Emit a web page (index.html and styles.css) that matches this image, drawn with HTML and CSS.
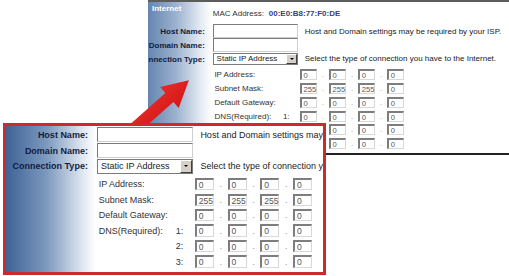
FILE: index.html
```html
<!DOCTYPE html>
<html lang="en">
<head>
    <meta charset="UTF-8">
    <title>Internet Settings</title>
    <link rel="stylesheet" href="styles.css">
</head>
<body>
    <div class="stage">
        <div class="panel panel-back">
            <div class="form">
                <div class="row head">
                    <div class="lbl head-lbl">Internet</div>
                    <div class="field">
                        <span class="mac">MAC Address:</span>
                        <span class="mac-val">00:E0:B8:77:F0:DE</span>
                    </div>
                </div>
                <div class="row">
                    <div class="lbl">Host Name:</div>
                    <div class="field"><span class="box"></span><span class="hint">Host and Domain settings may be required by your ISP.</span></div>
                </div>
                <div class="row">
                    <div class="lbl">Domain Name:</div>
                    <div class="field"><span class="box"></span></div>
                </div>
                <div class="row">
                    <div class="lbl">Connection Type:</div>
                    <div class="field">
                        <span class="select">Static IP Address<span class="select-btn"></span></span>
                        <span class="hint">Select the type of connection you have to the Internet.</span>
                    </div>
                </div>
                <div class="row sub first">
                    <div class="lbl"></div>
                    <div class="sub-lbl">IP Address:</div>
                    <div class="octets"><span class="oct">0</span><span class="dot">.</span><span class="oct">0</span><span class="dot">.</span><span class="oct">0</span><span class="dot">.</span><span class="oct">0</span></div>
                </div>
                <div class="row sub">
                    <div class="lbl"></div>
                    <div class="sub-lbl">Subnet Mask:</div>
                    <div class="octets"><span class="oct">255</span><span class="dot">.</span><span class="oct">255</span><span class="dot">.</span><span class="oct">255</span><span class="dot">.</span><span class="oct">0</span></div>
                </div>
                <div class="row sub">
                    <div class="lbl"></div>
                    <div class="sub-lbl">Default Gateway:</div>
                    <div class="octets"><span class="oct">0</span><span class="dot">.</span><span class="oct">0</span><span class="dot">.</span><span class="oct">0</span><span class="dot">.</span><span class="oct">0</span></div>
                </div>
                <div class="row sub">
                    <div class="lbl"></div>
                    <div class="sub-lbl">DNS(Required):<span>1:</span></div>
                    <div class="octets"><span class="oct">0</span><span class="dot">.</span><span class="oct">0</span><span class="dot">.</span><span class="oct">0</span><span class="dot">.</span><span class="oct">0</span></div>
                </div>
                <div class="row sub">
                    <div class="lbl"></div>
                    <div class="sub-lbl"><span></span><span>2:</span></div>
                    <div class="octets"><span class="oct">0</span><span class="dot">.</span><span class="oct">0</span><span class="dot">.</span><span class="oct">0</span><span class="dot">.</span><span class="oct">0</span></div>
                </div>
                <div class="row sub">
                    <div class="lbl"></div>
                    <div class="sub-lbl"><span></span><span>3:</span></div>
                    <div class="octets"><span class="oct">0</span><span class="dot">.</span><span class="oct">0</span><span class="dot">.</span><span class="oct">0</span><span class="dot">.</span><span class="oct">0</span></div>
                </div>
            </div>
        </div>

        <svg class="arrow" width="509" height="276" viewBox="0 0 509 276">
            <defs>
                <linearGradient id="arrowFill" x1="0" y1="0" x2="1" y2="1">
                    <stop offset="0" stop-color="#f23a32"/>
                    <stop offset="0.6" stop-color="#d81c1c"/>
                    <stop offset="1" stop-color="#a80e10"/>
                </linearGradient>
            </defs>
            <polygon points="131,123.5 165.4,93 160.1,87 188.9,80.2 178.7,108 173.4,102 139,132.5" fill="url(#arrowFill)"/>
        </svg>

        <div class="panel panel-zoom">
            <div class="form">
                <div class="row">
                    <div class="lbl">Host Name:</div>
                    <div class="field"><span class="box"></span><span class="hint">Host and Domain settings may be required by your ISP.</span></div>
                </div>
                <div class="row">
                    <div class="lbl">Domain Name:</div>
                    <div class="field"><span class="box"></span></div>
                </div>
                <div class="row">
                    <div class="lbl">Connection Type:</div>
                    <div class="field">
                        <span class="select">Static IP Address<span class="select-btn"></span></span>
                        <span class="hint">Select the type of connection you have to the Internet.</span>
                    </div>
                </div>
                <div class="row sub first">
                    <div class="lbl"></div>
                    <div class="sub-lbl">IP Address:</div>
                    <div class="octets"><span class="oct">0</span><span class="dot">.</span><span class="oct">0</span><span class="dot">.</span><span class="oct">0</span><span class="dot">.</span><span class="oct">0</span></div>
                </div>
                <div class="row sub">
                    <div class="lbl"></div>
                    <div class="sub-lbl">Subnet Mask:</div>
                    <div class="octets"><span class="oct">255</span><span class="dot">.</span><span class="oct">255</span><span class="dot">.</span><span class="oct">255</span><span class="dot">.</span><span class="oct">0</span></div>
                </div>
                <div class="row sub">
                    <div class="lbl"></div>
                    <div class="sub-lbl">Default Gateway:</div>
                    <div class="octets"><span class="oct">0</span><span class="dot">.</span><span class="oct">0</span><span class="dot">.</span><span class="oct">0</span><span class="dot">.</span><span class="oct">0</span></div>
                </div>
                <div class="row sub">
                    <div class="lbl"></div>
                    <div class="sub-lbl">DNS(Required):<span>1:</span></div>
                    <div class="octets"><span class="oct">0</span><span class="dot">.</span><span class="oct">0</span><span class="dot">.</span><span class="oct">0</span><span class="dot">.</span><span class="oct">0</span></div>
                </div>
                <div class="row sub">
                    <div class="lbl"></div>
                    <div class="sub-lbl"><span></span><span>2:</span></div>
                    <div class="octets"><span class="oct">0</span><span class="dot">.</span><span class="oct">0</span><span class="dot">.</span><span class="oct">0</span><span class="dot">.</span><span class="oct">0</span></div>
                </div>
                <div class="row sub">
                    <div class="lbl"></div>
                    <div class="sub-lbl"><span></span><span>3:</span></div>
                    <div class="octets"><span class="oct">0</span><span class="dot">.</span><span class="oct">0</span><span class="dot">.</span><span class="oct">0</span><span class="dot">.</span><span class="oct">0</span></div>
                </div>
            </div>
        </div>
    </div>
</body>
</html>
```

FILE: styles.css
```css
body {
    margin: 0;
    background: #fff;
    font-family: "Liberation Sans", Arial, sans-serif;
}
.stage {
    position: relative;
    width: 509px;
    height: 276px;
    overflow: hidden;
}
.panel {
    box-sizing: border-box;
    overflow: hidden;
    background: #fff;
}
.panel-back {
    margin-left: 148px;
    width: 361px;
    height: 155px;
    border-top: 2px solid #5c5c5c;
    border-bottom: 2px solid #222;
    font-size: 8px;
}
.panel-back .form {
    margin-left: -2em;
    background-image: linear-gradient(to right, #47699b 0, #6585b0 20%, #9cb2cf 55%, #e3e9f2 85%, #fff 100%);
}
.panel-zoom {
    position: absolute;
    left: 3px;
    top: 123px;
    width: 323px;
    height: 152px;
    border: 3px solid #cf2a2a;
    font-size: 9px;
}
.panel-zoom .form {
    padding-top: 1px;
}
.arrow {
    position: absolute;
    left: 0;
    top: 0;
}
.form {
    height: 100%;
    background: linear-gradient(to right, #3f6397 0, #7c99be 45%, #dfe7f1 85%, #fff 100%) 0 0 / 10em 100% no-repeat, #fff;
}
.panel-back .form {
    background-size: 10em 100%;
    background-repeat: no-repeat;
}
.row {
    display: flex;
    align-items: center;
    height: 1.75em;
    white-space: nowrap;
}
.lbl {
    flex: none;
    width: 9.1em;
    margin-right: 1em;
    text-align: right;
    font-weight: bold;
    color: #141c40;
}
.head {
    height: 2.75em;
}
.head-lbl {
    box-sizing: border-box;
    align-self: flex-start;
    padding: 0.3em 0 0 2.5em;
    text-align: left;
    color: #fff;
}
.field {
    display: flex;
    align-items: center;
}
.mac {
    color: #333;
}
.mac-val {
    margin-left: 0.6em;
    font-weight: bold;
    color: #3b3b8f;
}
.box {
    width: 10.7em;
    height: 1.65em;
    box-sizing: border-box;
    border: 1px solid;
    border-color: #7b7b7b #cfcfcf #cfcfcf #7b7b7b;
    background: #fff;
}
.hint {
    margin-left: 0.8em;
    color: #222;
}
.select {
    display: flex;
    align-items: center;
    justify-content: space-between;
    width: 10.7em;
    height: 1.6em;
    box-sizing: border-box;
    padding-left: 0.35em;
    border: 1px solid #7b7b7b;
    background: #fff;
    color: #222;
}
.select-btn {
    display: flex;
    align-items: center;
    justify-content: center;
    width: 1.4em;
    height: 100%;
    box-sizing: border-box;
    border: 1px solid;
    border-color: #fff #404040 #404040 #fff;
    background: #d4d0c8;
}
.select-btn::after {
    content: "";
    border-left: 0.25em solid transparent;
    border-right: 0.25em solid transparent;
    border-top: 0.25em solid #000;
}
.sub {
    height: 1.72em;
}
.sub.first {
    margin-top: 0.25em;
}
.sub-lbl {
    display: flex;
    justify-content: space-between;
    width: 10.9em;
    box-sizing: border-box;
    padding: 0 1.3em 0 0.2em;
    color: #333;
}
.octets {
    display: flex;
    align-items: center;
}
.oct {
    width: 2.2em;
    height: 1.45em;
    box-sizing: border-box;
    padding-left: 0.2em;
    border-style: solid;
    border-width: 2px 1px 1px 2px;
    border-color: #7d7d7d #d8d8d8 #d8d8d8 #7d7d7d;
    color: #555;
    font-size: 0.95em;
    line-height: 1.2em;
}
.dot {
    width: 1.55em;
    text-align: center;
    color: #999;
}
```
